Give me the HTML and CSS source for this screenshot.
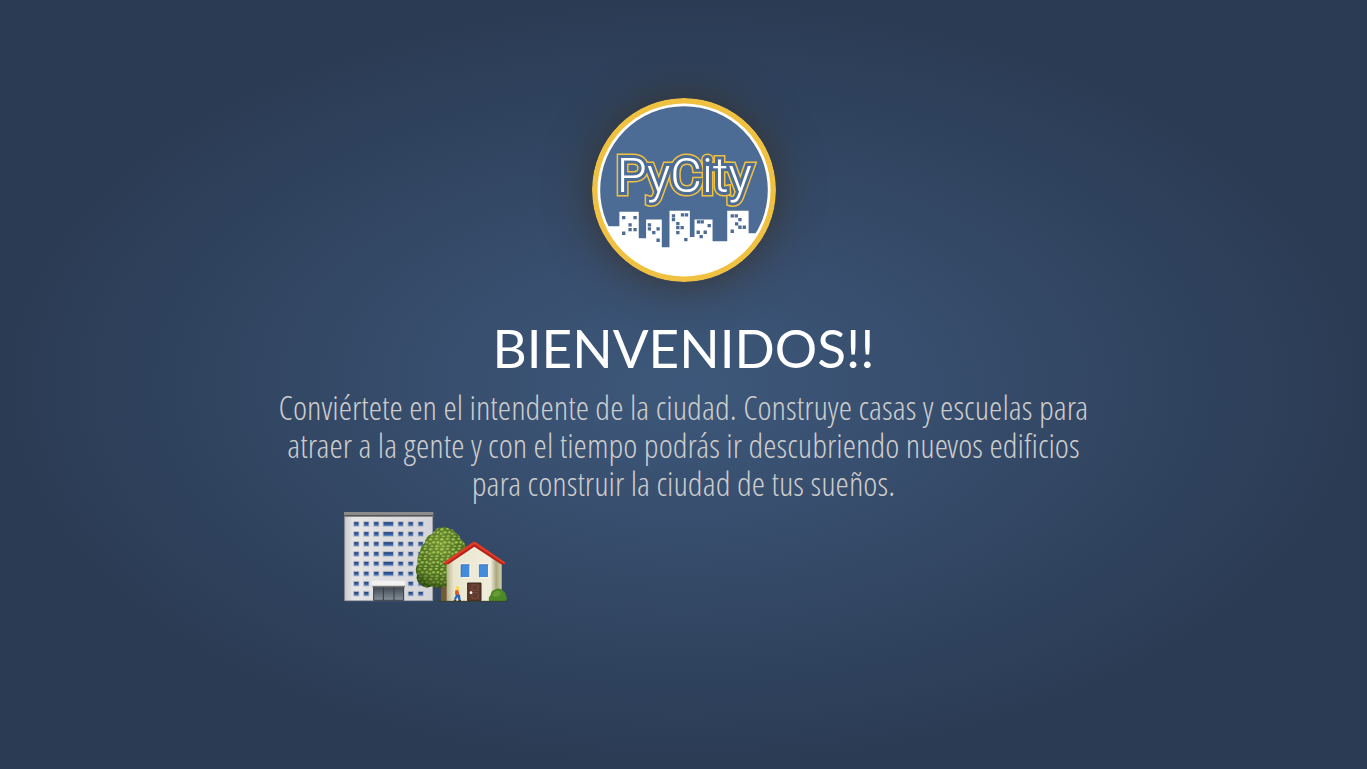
FILE: index.html
```html
<!DOCTYPE html>
<html lang="es">
<head>
<meta charset="utf-8">
<title>PyCity</title>
<link rel="stylesheet" href="styles.css">
</head>
<body>
<main class="welcome">
  <svg class="logo" viewBox="25 24 551 551" role="img" aria-label="PyCity">
    <defs><clipPath id="disc"><circle cx="300.500" cy="299.500" r="254"/></clipPath></defs>
    <circle cx="300.500" cy="299.500" r="275.500" fill="#f0c040"/>
    <circle cx="300.500" cy="299.500" r="259" fill="#fff"/>
    <circle cx="300.500" cy="299.500" r="251" fill="#4c6b95"/>
    <path clip-path="url(#disc)" fill="#fff" d="M20 408H107V365H165V444H187V388H234V471H257V362H318V440H332V388H386V453H430V362H494V429H580V580H20Z"/>
    <path stroke="#4c6b95" stroke-width="10" d="M115 382h10M149 382h10M134 404h10M134 418h10M149 418h10M115 429h10M192 404h10M192 416h10M218 416h10M205 427h10M218 450h10M264 377h10M291 374h10M303 374h10M264 388h10M277 400h10M277 412h10M290 412h10M277 427h10M301 448h10M339 395h10M350 395h10M371 406h10M338 426h10M359 426h10M347 439h10M440 377h10M452 377h10M463 388h10M453 401h10M463 411h10M476 411h10M440 423h10"/>
    <g class="logo-text">
      <text class="logo-outline" x="99" y="305" aria-hidden="true">PyCity</text>
      <text class="logo-gap" x="99" y="305" aria-hidden="true">PyCity</text>
      <text class="logo-face" x="99" y="305">PyCity</text>
    </g>
  </svg>
  <h1 class="title">BIENVENIDOS!!</h1>
  <p class="intro">Conviértete en el intendente de la ciudad. Construye casas y escuelas para<br>atraer a la gente y con el tiempo podrás ir descubriendo nuevos edificios<br>para construir la ciudad de tus sueños.</p>
  <div class="scene-row">
    <svg class="scene" viewBox="15 12 498 273" aria-hidden="true">
      <defs>
        <linearGradient id="wall"><stop offset="0" stop-color="#c9c9cb"/><stop offset=".1" stop-color="#e6e6e8"/><stop offset="1" stop-color="#d5d5d9"/></linearGradient>
        <linearGradient id="glass" x2="0" y2="1"><stop offset="0" stop-color="#1c3566"/><stop offset="1" stop-color="#4c80cd"/></linearGradient>
        <linearGradient id="lobby" x2="0" y2="1"><stop offset="0" stop-color="#3c444c"/><stop offset="1" stop-color="#84909a"/></linearGradient>
        <linearGradient id="house"><stop offset="0" stop-color="#b8b489"/><stop offset=".13" stop-color="#e9e6d0"/><stop offset=".8" stop-color="#efedda"/><stop offset=".9" stop-color="#aaa781"/><stop offset="1" stop-color="#d3cfaa"/></linearGradient>
        <radialGradient id="shade" cx=".48" cy=".3" r=".7"><stop offset="0" stop-color="#bcd55a" stop-opacity=".4"/><stop offset=".6" stop-color="#7a9c38" stop-opacity=".12"/><stop offset="1" stop-color="#203b08" stop-opacity=".65"/></radialGradient>
        <radialGradient id="leaf" cx=".4" cy=".3"><stop offset="0" stop-color="#c5dc74"/><stop offset=".55" stop-color="#86a840"/><stop offset="1" stop-color="#4a6c20"/></radialGradient>
        <pattern id="leaves" width="34" height="30" patternUnits="userSpaceOnUse">
          <path fill="#456a1e" d="M0 0h34v30H0z"/>
          <g fill="url(#leaf)"><ellipse cx="7" cy="6" rx="8" ry="6"/><ellipse cx="24" cy="4" rx="7" ry="5"/><ellipse cx="16" cy="15" rx="8" ry="6"/><ellipse cx="29" cy="15" rx="6" ry="7"/><ellipse cx="4" cy="19" rx="6" ry="6"/><ellipse cx="11" cy="26" rx="7" ry="4"/><ellipse cx="26" cy="26" rx="8" ry="5"/></g>
        </pattern>
        <g id="floor" fill="url(#glass)" stroke="#bfc2c8" stroke-width="3"><path d="M47 41h16v14H47zM77 41h16v14H77zM210 41h16v14h-16zM240 41h16v14h-16z"/></g>
        <path id="middle" fill="url(#glass)" stroke="#bfc2c8" stroke-width="3" d="M107 41h16v14h-16zM135 41h32v14h-32zM180 41h16v14h-16z"/>
        <path id="crown" d="M292 67q5-10 16-8 15-5 26 3 14 1 18 13 12 4 15 17 16 10 15 28 10 24 0 47-2 25-22 36-14 28-39 32-20 10-38 0-23 9-36-7-14-10-10-28-8-18 2-32-3-21 7-34 0-19 14-29 4-23 22-27z"/>
      </defs>
      <path fill="url(#wall)" stroke="#9b9ca2" stroke-width="2" d="M20 24h264v254H20z"/>
      <path fill="#8b8b8c" d="M18 12h268v14H18z"/><path fill="#555" d="M18 21h268v4H18z"/>
      <use href="#floor"/><use href="#floor" y="30"/><use href="#floor" y="60"/><use href="#floor" y="90"/><use href="#floor" y="119"/><use href="#floor" y="149"/><use href="#floor" y="179"/><use href="#floor" y="209"/>
      <use href="#middle"/><use href="#middle" y="30"/><use href="#middle" y="60"/><use href="#middle" y="90"/><use href="#middle" y="119"/><use href="#middle" y="149"/>
      <path fill="url(#lobby)" stroke="#353b43" stroke-width="3" d="M107 234h90v43h-90zM136 235v42M168 235v42"/>
      <path fill="#777" d="M103 232h98v6h-98z"/><rect x="101" y="218" width="100" height="15" rx="3" fill="#f1f1f1"/>
      <path fill="#705b36" d="M309 228h20v51h-20z"/>
      <use href="#crown" fill="url(#leaves)"/>
      <use href="#crown" fill="url(#shade)"/>
      <path fill="url(#house)" d="M326 166l83-56 82 56v113H326z"/>
      <path fill="#b32017" d="M318 165l91-61 91 61 3 4h-14l-80-53-78 53h-14z"/>
      <path fill="#e13b25" d="M318 163l86-60q5-3 10 0l89 61-5 4-89-59-86 59z"/>
      <g fill="#438bdd" stroke="#f7f5e9" stroke-width="4"><path d="M367 168h29v41h-29zM422 168h30v41h-30z"/></g>
      <path fill="none" stroke="#315f9b" stroke-width="2" d="M369 208v-38h26M424 208v-38h27"/>
      <path fill="#61392c" stroke="#3b241d" stroke-width="3" d="M389 225h40v53h-40z"/><path fill="none" stroke="#805746" stroke-width="2" d="M402 231h18v16h-18zM402 254h18v17h-18z"/><circle cx="399" cy="254" r="4" fill="#fff"/>
      <path fill="#4d8826" d="M453 279q-3-12 5-18 1-14 12-16 16-8 26 4 9 6 8 14 5 9-1 16z"/><path fill="#79aa3d" opacity=".6" d="M463 260q8-15 24-9 4 10-8 14-9 5-16-5z"/>
      <path fill="#ffd653" d="M353 237q4-6 10 0l2 7-5 4-7-3z"/><path fill="#d95620" d="M352 247h9l3 15-9 2-4-6z"/><path fill="#2866bb" d="M354 260h12l2 17h-7l-2-10-7 10-4-4z"/><path stroke="#242320" stroke-width="3" d="M347 277h8M361 278h8"/>
      <path stroke="#39402e" stroke-width="3" d="M300 280h208"/>
    </svg>
  </div>
</main>
</body>
</html>
```
FILE: styles.css
```css
* { box-sizing: border-box; }
body {
  margin: 0;
  min-height: 100vh;
  background: #2b3b54 radial-gradient(ellipse farthest-side at center, #3d587a 0%, #384e6e 35%, #30445f 70%, #2b3b54 100%) no-repeat;
  color: #fff;
  font-family: Lato, "Open Sans", sans-serif;
}
.welcome {
  display: flex;
  flex-direction: column;
  align-items: center;
  padding: 98px 24px 24px;
}
.logo {
  display: block;
  width: 184px;
  height: 184px;
  border-radius: 50%;
  box-shadow: 0 0 45px rgba(54, 50, 42, 0.9);
}
.logo-text {
  font-family: "Roboto Light", Roboto, sans-serif;
  font-size: 146px;
  font-weight: 300;
}
.logo-outline { fill: #f0c040; stroke: #f0c040; stroke-width: 27px; }
.logo-gap { fill: #4c6b95; stroke: #4c6b95; stroke-width: 18px; }
.logo-face { fill: #fff; }
.title {
  margin: 28px 0 3px;
  font-size: 53px;
  font-weight: 400;
  line-height: 75px;
}
.intro {
  margin: 0;
  color: #ccc;
  font-family: "Open Sans Condensed Light", "Open Sans Light Condensed", "Liberation Sans Narrow", "Open Sans Condensed", sans-serif;
  font-size: 34px;
  font-weight: 300;
  line-height: 38px;
  text-align: center;
}
.scene-row {
  width: 100%;
  max-width: 682px;
  padding-top: 10px;
}
.scene {
  display: block;
  width: 166px;
  height: 91px;
}
```
